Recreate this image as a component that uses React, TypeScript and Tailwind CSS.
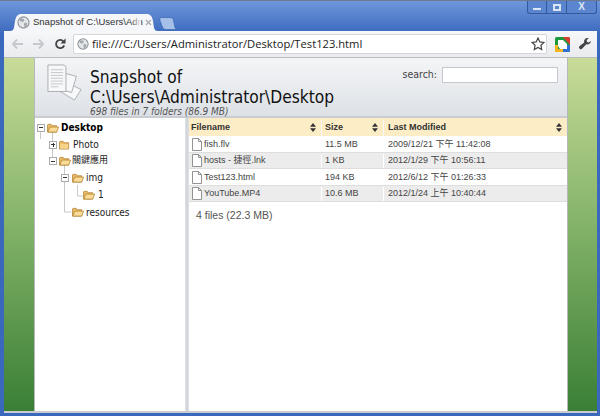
import React from 'react';

function Globe({ size = 14 }: { size?: number }) {
  return (
    <svg width={size} height={size} viewBox="0 0 14 14" className="shrink-0">
      <circle cx="7" cy="7" r="6" fill="#e4e7ea" stroke="#8b9196" strokeWidth="1.2" />
      <path d="M4 2.5l3 .5 1 2-2 1.5-2-.5-1.5-2zM8 7l3 .5-.5 3-2 2-1-2.5z" fill="#a3a9ae" />
    </svg>
  );
}

function Folder({ open = true }: { open?: boolean }) {
  return (
    <svg width="12" height="10" viewBox="0 0 13 11" className="shrink-0">
      <path d="M.5 2V10h10V3H5.5L4.5 1.500h-3z" fill="#eebc68" stroke="#ad7f2e" strokeWidth=".8" />
      {open ? (
        <path d="M.8 10 3 4.500h9.700L10.500 10z" fill="#fadc98" stroke="#ad7f2e" strokeWidth=".8" />
      ) : (
        <path d="M1 4.500h9v5H1z" fill="#f6d48c" />
      )}
    </svg>
  );
}

function Toggle({ plus = false }: { plus?: boolean }) {
  return (
    <span className="relative flex h-[8px] w-[8px] shrink-0 items-center justify-center border border-[#aaa] bg-white">
      <span className="h-px w-[4px] bg-[#333]" />
      {plus && <span className="absolute h-[4px] w-px bg-[#333]" />}
    </span>
  );
}

function FileIcon() {
  return (
    <svg width="10" height="13" viewBox="0 0 10 13" className="shrink-0">
      <path d="M.5.5h6l3 3v9h-9z M6.500.5v3h3" fill="#fff" stroke="#888" strokeWidth=".9" />
    </svg>
  );
}

function SortArrows() {
  return (
    <svg width="6" height="9" viewBox="0 0 6 9" className="shrink-0">
      <path d="M3 0l3 3.700H0zM3 9l3-3.700H0z" fill="#333" />
    </svg>
  );
}

function DocsIcon() {
  return (
    <svg width="36" height="37" viewBox="0 0 38 39" className="shrink-0">
      <g fill="#f7f8f9" stroke="#a9adb1" strokeWidth="1">
        <path d="M20 19l16 8-7 11-15-9z" />
        <path d="M16 9l15 4-5 17-15-4z" />
        <path d="M1 1h17l2 2v26H1z" />
      </g>
      <path d="M4 6h13M4 9h13M4 12h13M4 15h13M4 18h13M4 21h13M4 24h8" stroke="#c4c7ca" strokeWidth="1" />
    </svg>
  );
}

const files = [
  { name: 'fish.flv', size: '11.5 MB', date: '2009/12/21 下午 11:42:08' },
  { name: 'hosts - 捷徑.lnk', size: '1 KB', date: '2012/1/29 下午 10:56:11' },
  { name: 'Test123.html', size: '194 KB', date: '2012/6/12 下午 01:26:33' },
  { name: 'YouTube.MP4', size: '10.6 MB', date: '2012/1/24 上午 10:40:44' },
];

export default function App() {
  return (
    <div className="flex h-[416px] w-[600px] flex-col overflow-hidden border-t border-[#6b7a90] bg-gradient-to-b from-[#6f97da] via-[#3a68bd] via-[8%] to-[#3a68bd] font-['Liberation_Sans','Noto_Sans_CJK_TC',sans-serif]">
      {/* title bar */}
      <div className="flex h-[13px] shrink-0 justify-end pr-[3px]">
        <div className="flex h-[13px] w-[70px] overflow-hidden rounded-b-[3px] border border-t-0 border-[#34589c] bg-[#5b85cf]">
          <div className="flex w-[19px] items-end justify-center border-r border-[#34589c] pb-[3px]">
            <span className="h-[2px] w-[8px] bg-[#dbe6f5]" />
          </div>
          <div className="flex w-[20px] items-center justify-center border-r border-[#34589c]">
            <span className="h-[7px] w-[8px] border-2 border-[#dbe6f5]" />
          </div>
          <div className="flex flex-1 items-center justify-center text-[10px] leading-none font-bold text-[#dbe6f5]">X</div>
        </div>
      </div>

      {/* tabs */}
      <div className="flex h-[17px] shrink-0 items-end pl-[10px]">
        <div className="relative flex h-[17px] w-[148px] items-center pl-[7px]">
          <svg width="148" height="17" viewBox="0 0 148 17" className="absolute top-0 left-0">
            <path d="M0 17c4 0 4-3 5-10 1-5 3-7 6-7h126c3 0 5 2 6 7 1 7 1 10 5 10z" fill="#f4f6f9" />
          </svg>
          <span className="relative"><Globe size={13} /></span>
          <span className="relative ml-[3px] w-[108px] text-[9.5px] whitespace-nowrap text-[#333]">
            Snapshot of C:\Users\Adn
            <span className="absolute top-0 right-0 h-full w-[10px] bg-gradient-to-r from-transparent to-[#f4f6f9]" />
          </span>
          <svg width="7" height="7" viewBox="0 0 7 7" className="relative ml-[4px] shrink-0">
            <path d="M1 1l5 5M6 1L1 6" stroke="#a5a8ab" strokeWidth="1.2" />
          </svg>
        </div>
        <svg width="20" height="13" viewBox="0 0 20 13" className="mb-[1px] ml-[1px] shrink-0">
          <path d="M19 12.500c-2 0-3-1-3.500-4L14.500 3C14 1.500 13 .5 11 .5H2.500C1 .5 .5 2 1 3.500L3 9c1 2.500 2 3.500 4 3.500z" fill="#a5c0e8" stroke="#3f6ab5" strokeWidth=".8" />
        </svg>
      </div>

      {/* chrome body */}
      <div className="mr-[3px] ml-[4px] flex min-h-0 flex-1 flex-col border-b-[2px] border-[#c9cdd1] bg-white">
        {/* toolbar */}
        <div className="flex h-[27px] shrink-0 items-center rounded-t-[3px] border-b border-[#b8bcc0] bg-gradient-to-b from-[#f5f7f9] to-[#e9ebee]">
          <svg width="11" height="10" viewBox="0 0 11 10" className="ml-[8px] shrink-0">
            <path d="M5 .5L1 5l4 4.500M1.500 5H11" fill="none" stroke="#c6cacd" strokeWidth="2" />
          </svg>
          <svg width="11" height="10" viewBox="0 0 11 10" className="ml-[10px] shrink-0">
            <path d="M6 .5L10 5 6 9.500M9.500 5H0" fill="none" stroke="#c6cacd" strokeWidth="2" />
          </svg>
          <svg width="12" height="12" viewBox="0 0 13 13" className="ml-[10px] shrink-0">
            <path d="M10.500 4A4.500 4.500 0 1 0 11 8" fill="none" stroke="#444" strokeWidth="2" />
            <path d="M12.500 .5v5.500H7z" fill="#444" />
          </svg>
          <div className="mr-[3px] ml-[7px] flex h-[20px] flex-1 items-center rounded-[2px] border border-[#d4d7da] bg-white pl-[3px]">
            <Globe size={12} />
            <span className="ml-[3px] flex-1 font-['Open_Sans',sans-serif] text-[11.2px] text-[#222]">file:///C:/Users/Administrator/Desktop/Test123.html</span>
            <svg width="14" height="14" viewBox="0 0 14 14" className="mr-[1px]">
              <path d="M7 1l1.800 3.900 4.200.500-3.100 2.900.8 4.200L7 10.400l-3.700 2.100.8-4.200L1 5.400l4.200-.5z" fill="#fff" stroke="#444" strokeWidth="1.200" />
            </svg>
          </div>
          <svg width="15" height="15" viewBox="0 0 15 15" className="mx-[5px] shrink-0">
            <rect width="15" height="15" rx="1.500" fill="#1c9a3e" />
            <path d="M8 0h5.500A1.500 1.500 0 0 1 15 1.500V8z" fill="#dc3d32" />
            <path d="M0 15V8h3v4h5v3z" fill="#f3b61f" />
            <path d="M8 15v-3h4V8h3v5.500A1.500 1.500 0 0 1 13.500 15z" fill="#2f6fd8" />
            <path d="M3 3h5l4 4v5H5l-2-3z" fill="#fff" />
          </svg>
          <svg width="14" height="14" viewBox="0 0 14 14" className="mr-[5px] ml-[3px] shrink-0">
            <path d="M9.500 1a3.500 3.500 0 0 0-3.300 4.600L1.400 9.200a1.800 1.800 0 1 0 2.900 2.300l4-4.300A3.500 3.500 0 0 0 13 4l-2.200 1.600-1.800-.6-.3-1.900L10.800 1.200A3.500 3.500 0 0 0 9.500 1z" fill="#444" />
          </svg>
        </div>

        {/* page */}
        <div className="flex min-h-0 flex-1">
          <div className="w-[30px] shrink-0 bg-gradient-to-b from-[#c8dc98] via-[#7fb066] to-[#3a7f36]" />
          <div className="flex min-w-0 flex-1 flex-col border-x border-[#b5b9bd] bg-white">
            {/* header */}
            <div className="relative h-[60px] shrink-0 border-b-[2px] border-[#c9cdd2] bg-gradient-to-b from-[#f4f5f7] to-[#dde1e6] pt-[9px] pl-[55px] font-['DejaVu_Sans',sans-serif] font-stretch-condensed">
              <div className="absolute top-[6px] left-[12px]"><DocsIcon /></div>
              <div className="absolute top-[9px] right-[9px] flex items-center">
                <span className="mr-[5px] text-[10.500px] text-[#444]">search:</span>
                <div className="h-[16px] w-[116px] border border-[#c5c8cc] bg-white" />
              </div>
              <div className="text-[17.200px] leading-[20px] text-[#111]">
                Snapshot of<br />C:\Users\Administrator\Desktop
              </div>
              <div className="text-[10px] leading-[10px] text-[#555] italic">698 files in 7 folders (86.9 MB)</div>
            </div>

            <div className="flex min-h-0 flex-1">
              {/* tree */}
              <div className="relative w-[150px] shrink-0 pt-[1px] font-['DejaVu_Sans','Noto_Sans_CJK_TC',sans-serif] text-[10px] text-[#222] font-stretch-condensed">
                <svg width="150" height="110" viewBox="0 0 150 110" className="absolute top-0 left-0">
                  <path d="M5.500 13v8M17.500 13v34M17.500 30h-4M29.500 47v47h7M29.500 61h-4M42.500 67v11h6" fill="none" stroke="#c8c8c8" strokeWidth="1" />
                </svg>
                <div className="relative flex h-[17px] items-center pl-[2px]"><Toggle /><span className="ml-[2px]"><Folder /></span><span className="ml-[2px] font-bold text-black">Desktop</span></div>
                <div className="relative flex h-[17px] items-center pl-[14px]"><Toggle plus /><span className="ml-[2px]"><Folder open={false} /></span><span className="ml-[2px]">Photo</span></div>
                <div className="relative flex h-[16px] items-center pl-[14px]"><Toggle /><span className="ml-[2px]"><Folder /></span><span className="ml-[1px] text-[9px]">關鍵應用</span></div>
                <div className="relative flex h-[17px] items-center pl-[26px]"><Toggle /><span className="ml-[3px]"><Folder /></span><span className="ml-[2px]">img</span></div>
                <div className="relative flex h-[17px] items-center pl-[48px]"><Folder /><span className="ml-[3px]">1</span></div>
                <div className="relative flex h-[18px] items-center pl-[37px]"><Folder /><span className="ml-[2px]">resources</span></div>
              </div>

              {/* splitter */}
              <div className="w-[4px] shrink-0 border-x border-[#dcdfe2] bg-[#d3d6da]" />

              {/* file list */}
              <div className="min-w-0 flex-1 text-[9px] text-[#444]">
                <div className="flex h-[18px] items-center bg-[#fdedc6] pt-px font-bold text-[#333]">
                  <div className="flex h-full w-[133px] items-center justify-between border-r border-[#f8f8f8] pr-[5px] pl-[2px]">Filename <SortArrows /></div>
                  <div className="flex h-full w-[62px] items-center justify-between border-r border-[#f8f8f8] pr-[5px] pl-[3px]">Size <SortArrows /></div>
                  <div className="flex h-full flex-1 items-center justify-between pr-[5px] pl-[4px]">Last Modified <SortArrows /></div>
                </div>
                {files.map((f, i) => (
                  <div key={f.name} className={`flex h-[16.500px] items-center border-b border-[#dedede] pt-px ${i % 2 ? 'bg-[#ececec]' : 'bg-white'}`}>
                    <div className="flex h-full w-[133px] items-center gap-[2px] border-r border-white pl-[3px]"><FileIcon /><span>{f.name}</span></div>
                    <div className="flex h-full w-[62px] items-center border-r border-white pl-[3px]">{f.size}</div>
                    <div className="flex h-full flex-1 items-center pl-[4px]">{f.date}</div>
                  </div>
                ))}
                <div className="pt-[6px] pl-[7px] text-[10.500px] text-[#555]">4 files (22.3 MB)</div>
              </div>
            </div>
          </div>
          <div className="w-[29px] shrink-0 bg-gradient-to-b from-[#c8dc98] via-[#7fb066] to-[#3a7f36]" />
        </div>
      </div>
      <div className="h-[3px] shrink-0" />
    </div>
  );
}
